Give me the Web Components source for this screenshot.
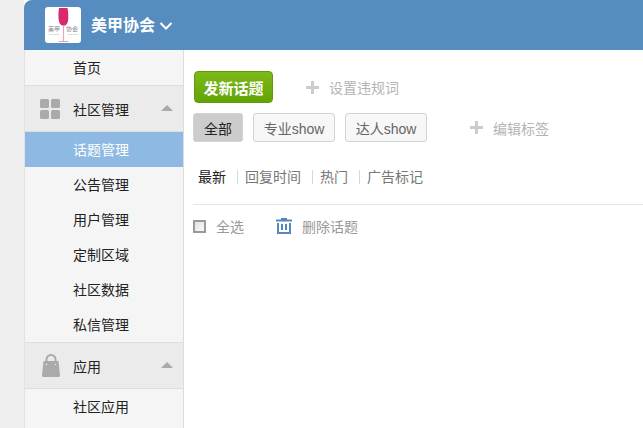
<!DOCTYPE html>
<html lang="zh"><head><meta charset="utf-8"><title>美甲协会</title>
<style>
html,body{margin:0;padding:0;height:428px;overflow:hidden;background:#efefef}
body{font-family:"Liberation Sans","Noto Sans CJK SC",sans-serif;font-size:14px}
</style></head><body>
<app-shell>
  <top-bar slot="top" title="美甲协会"></top-bar>
  <side-nav slot="side">
    <nav-item>首页</nav-item>
    <nav-group icon="grid">社区管理</nav-group>
    <nav-item active>话题管理</nav-item>
    <nav-item>公告管理</nav-item>
    <nav-item>用户管理</nav-item>
    <nav-item>定制区域</nav-item>
    <nav-item>社区数据</nav-item>
    <nav-item>私信管理</nav-item>
    <nav-group icon="bag">应用</nav-group>
    <nav-item>社区应用</nav-item>
  </side-nav>
  <topic-panel slot="main"></topic-panel>
</app-shell>
<script>
function def(name, css, html){
  customElements.define(name, class extends HTMLElement{
    connectedCallback(){
      if(this.shadowRoot) return;
      const r=this.attachShadow({mode:'open'});
      r.innerHTML='<style>'+css+'</style>'+(typeof html==='function'?html(this):html);
    }
  });
}
def('app-shell',`
:host{display:grid;grid-template-columns:160px 1fr;grid-template-rows:50px 1fr;margin-left:24px;height:428px;background:#fff;position:relative}
.t{grid-column:1/3;display:block}
`,`<slot name="top" class="t"></slot><slot name="side"></slot><slot name="main"></slot>`);
def('top-bar',`
:host{display:flex;align-items:center;height:50px;background:#568cc0;border-top-left-radius:8px;padding-left:21px;color:#fff}
.logo{width:36px;height:36px;background:#fff;border-radius:3px;position:relative;flex:none;overflow:hidden}
.logo svg{position:absolute;left:0;top:0}
.cap{position:absolute;top:18px;left:3px;right:3px;display:flex;justify-content:space-between;font-size:6px;line-height:8px;color:#888}
.name{font-size:16px;font-weight:700;margin-left:10px;line-height:24px;margin-top:1px}
.chev{margin-left:4px;margin-top:2px}
`,t=>`<div class="logo"><svg width="36" height="36" viewBox="0 0 36 36">
<path d="M14 1h8.500c.8 4 1.200 9 .5 13-.5 2.800-2.300 4.700-4.500 4.800-2.300.1-4-1.800-4.600-4.700-.7-4-.6-9 .1-13.100z" fill="#d9286e"/>
<path d="M18.500 18.500v15.500" stroke="#e4a9bf" stroke-width="1.200"/>
<path d="M13.500 34.500h10" stroke="#e2a3ba" stroke-width="1"/>
<path d="M4 27.500h10M23 27.500h10" stroke="#bbb" stroke-width=".8" stroke-dasharray="1 .6"/></svg>
<div class="cap"><span>美甲</span><span>协会</span></div></div>
<span class="name">${t.getAttribute('title')}</span>
<svg class="chev" width="14" height="10" viewBox="0 0 14 10"><path d="M1.500 2l5.500 5.500L12.500 2" fill="none" stroke="#fff" stroke-width="2"/></svg>`);
def('side-nav',`
:host{display:flex;flex-direction:column;width:160px;height:378px;overflow:hidden;background:#f5f5f5;border-left:1px solid #e2e2e2;border-right:1px solid #dcdcdc;box-sizing:border-box}
`,`<slot></slot>`);
def('nav-item',`
:host{display:flex;align-items:center;flex:none;height:35px;padding-left:48px;color:#222;font-size:14px;line-height:20px}
:host([active]){background:#8db9e2;color:#fff}
`,`<slot></slot>`);
const icons={grid:`<svg style="margin-left:2px" width="20" height="20" viewBox="0 0 20 20" fill="#aaa"><rect width="9" height="9" rx="1.500"/><rect x="11" width="9" height="9" rx="1.500"/><rect y="11" width="9" height="9" rx="1.500"/><rect x="11" y="11" width="9" height="9" rx="1.500"/></svg>`,
bag:`<svg style="margin-left:4px" width="18" height="23" viewBox="0 0 18 23"><path d="M4.500 8V5.500a4.500 4.500 0 0 1 9 0V8" fill="none" stroke="#aaa" stroke-width="2"/><path d="M1.500 7h15l1.500 14.500a1.500 1.500 0 0 1-1.500 1.500H1.500A1.500 1.500 0 0 1 0 21.500z" fill="#aaa"/><circle cx="4.500" cy="10.500" r=".8" fill="#eaeaea"/><circle cx="13.500" cy="10.500" r=".8" fill="#eaeaea"/></svg>`};
def('nav-group',`
:host{display:flex;align-items:center;flex:none;height:47px;box-sizing:border-box;background:#ebebeb;border-top:1px solid #dedede;border-bottom:1px solid #dedede;color:#222;font-size:14px;position:relative}
.i{width:48px;display:flex;justify-content:center}
.a{position:absolute;left:136px;top:19px;width:0;height:0;border:6px solid transparent;border-top:0;border-bottom:6px solid #aaa}
`,t=>`<span class="i">${icons[t.getAttribute('icon')]}</span><slot></slot><span class="a"></span>`);
def('tag-btn',`
:host{display:inline-flex;align-items:center;justify-content:center;box-sizing:border-box;width:82px;height:29px;border:1px solid #d4d4d4;border-radius:3px;background:#f7f7f7;color:#666;font-size:14px}
:host([on]){background:#cccccc;color:#222;width:50px}
`,`<slot></slot>`);
def('add-link',`
:host{display:inline-flex;align-items:center;color:#b4b4b4;font-size:14px}
svg{margin-right:10px;flex:none}
`,`<svg width="13" height="13" viewBox="0 0 13 13"><path d="M0 6.500h13M6.500 0v13" stroke="#ccc" stroke-width="3"/></svg><slot></slot>`);
def('filter-bar',`
:host{display:flex;align-items:center;height:20px;padding-left:5px;color:#777;font-size:14px}
`,`<slot></slot>`);
def('filter-link',`
:host{display:inline-block;color:#777}
:host([on]){color:#222}
:host(:not(:first-child))::before{content:"";display:inline-block;width:1px;height:14px;background:#cfdcdc;margin:0 7px 0 11px;vertical-align:-2px}
`,`<slot></slot>`);
def('topic-panel',`
:host{display:block;padding:21px 0 0 10px;height:357px;overflow:hidden;font-size:14px;min-width:0}
.r1{display:flex;align-items:center;height:32px}
.pub{display:flex;align-items:center;justify-content:center;box-sizing:border-box;width:79px;height:32px;border:1px solid #5f9a0c;border-radius:4px;background:linear-gradient(#7cba1a,#63a304);color:#fff;font-weight:700;font-size:15px}
.r1 add-link{margin-left:33px}
.r2{display:flex;align-items:center;gap:10px;margin-top:10px;margin-left:-1px}
.r2 add-link{margin-left:33px}
filter-bar{margin-top:24px;margin-left:-1px}
hr{border:0;border-top:1px solid #e6e6e6;margin:18px 0 0 -1px}
.r3{display:flex;align-items:center;height:20px;margin-top:11px;margin-left:-1px;color:#999;font-size:14px}
.cb{width:13px;height:13px;box-sizing:border-box;border:2px solid #9a9a9a;background:linear-gradient(135deg,#dfe1e6,#fbfbfb);margin-right:10px}
.tr{margin:0 10px 0 32px;display:block}
`,`<div class="r1"><div class="pub">发新话题</div><add-link>设置违规词</add-link></div>
<div class="r2"><tag-btn on>全部</tag-btn><tag-btn>专业show</tag-btn><tag-btn>达人show</tag-btn><add-link>编辑标签</add-link></div>
<filter-bar><filter-link on>最新</filter-link><filter-link>回复时间</filter-link><filter-link>热门</filter-link><filter-link>广告标记</filter-link></filter-bar>
<hr>
<div class="r3"><span class="cb"></span><span>全选</span>
<svg class="tr" width="16" height="16" viewBox="0 0 16 16"><path d="M0 2.500h16M5 1h6" stroke="#5488bb" stroke-width="2" fill="none"/><path d="M2 5v10h12V5" fill="none" stroke="#5488bb" stroke-width="2"/><path d="M6 6v6M10 6v6" stroke="#5488bb" stroke-width="2"/></svg>
<span>删除话题</span></div>`);
</script>
</body></html>
